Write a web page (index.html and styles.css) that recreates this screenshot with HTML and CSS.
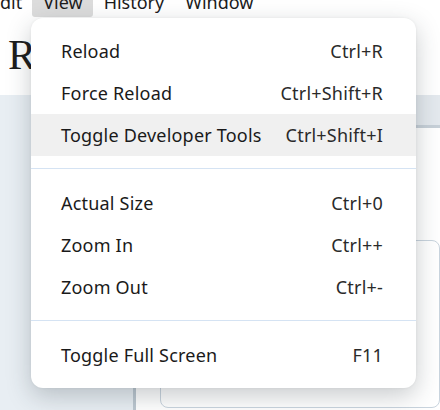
FILE: index.html
```html
<!DOCTYPE html>
<html>
<head>
<meta charset="utf-8">
<link rel="stylesheet" href="styles.css">
</head>
<body>
<div class="menubar">
  <span class="mb-item">Edit</span>
  <span class="mb-item active">View</span>
  <span class="mb-item">History</span>
  <span class="mb-item">Window</span>
</div>
<div class="header"><h1 class="title">R</h1></div>
<div class="main">
  <aside class="sidebar"></aside>
  <section class="content">
    <div class="toolbar"></div>
    <div class="workspace">
      <div class="card"></div>
    </div>
  </section>
</div>

<div class="menu">
  <div class="item"><span>Reload</span><span class="sc">Ctrl+R</span></div>
  <div class="item"><span>Force Reload</span><span class="sc">Ctrl+Shift+R</span></div>
  <div class="item hover"><span>Toggle Developer Tools</span><span class="sc">Ctrl+Shift+I</span></div>
  <div class="sep"></div>
  <div class="item"><span>Actual Size</span><span class="sc">Ctrl+0</span></div>
  <div class="item"><span>Zoom In</span><span class="sc">Ctrl++</span></div>
  <div class="item"><span>Zoom Out</span><span class="sc">Ctrl+-</span></div>
  <div class="sep"></div>
  <div class="item"><span>Toggle Full Screen</span><span class="sc">F11</span></div>
</div>
</body>
</html>
```
FILE: styles.css
```css
html, body {
  margin: 0;
  padding: 0;
  width: 440px;
  height: 410px;
  overflow: hidden;
  background: #ffffff;
}
body {
  position: relative;
  font-family: "Noto Sans", "Open Sans", sans-serif;
  color: #1c1c1c;
}
.menubar {
  display: flex;
  height: 17px;
  margin-left: -21px;
  font-size: 18px;
  line-height: 30px;
  color: #1c1c1c;
  overflow: visible;
}
.mb-item {
  position: relative;
  top: -13px;
  height: 30px;
  padding: 0 10px 0 11px;
}
.mb-item.active {
  background: #dcdcdc;
  border-radius: 0 0 3px 3px;
}
.header {
  height: 78px;
}
.title {
  margin: 0;
  padding-left: 8px;
  font-family: "Liberation Serif", serif;
  font-weight: normal;
  font-size: 42px;
  line-height: 1;
  padding-top: 17px;
}
.main {
  display: flex;
  height: 315px;
}
.sidebar {
  width: 133px;
  flex-shrink: 0;
  background: #e8eef3;
  border-right: 3px solid #bcc7d0;
}
.content {
  flex: 1;
  display: flex;
  flex-direction: column;
}
.toolbar {
  flex-shrink: 0;
  height: 30px;
  background: #e4e9ee;
  border-bottom: 3px solid #c7d0d8;
}
.workspace {
  flex: 1;
  padding: 112px 0 0 24px;
}
.card {
  height: 166px;
  border: 1px solid #c9d4de;
  border-radius: 8px;
}
.menu {
  position: absolute;
  left: 31px;
  top: 18px;
  width: 385px;
  padding: 12px 0;
  background: #ffffff;
  border-radius: 12px;
  box-shadow: 0 8px 24px rgba(40, 50, 60, 0.25), 0 0 3px rgba(0, 0, 0, 0.06);
  font-size: 18px;
  letter-spacing: 0.2px;
  box-sizing: border-box;
}
.item {
  display: flex;
  justify-content: space-between;
  align-items: center;
  height: 42px;
  padding: 0 33px 0 30px;
  color: #1a1a1a;
}
.item.hover {
  background: #f0f0f0;
}
.sc {
  color: #2a2a2a;
}
.sep {
  height: 1px;
  background: #d5e3f3;
  margin: 12px 0 13px;
}
```
